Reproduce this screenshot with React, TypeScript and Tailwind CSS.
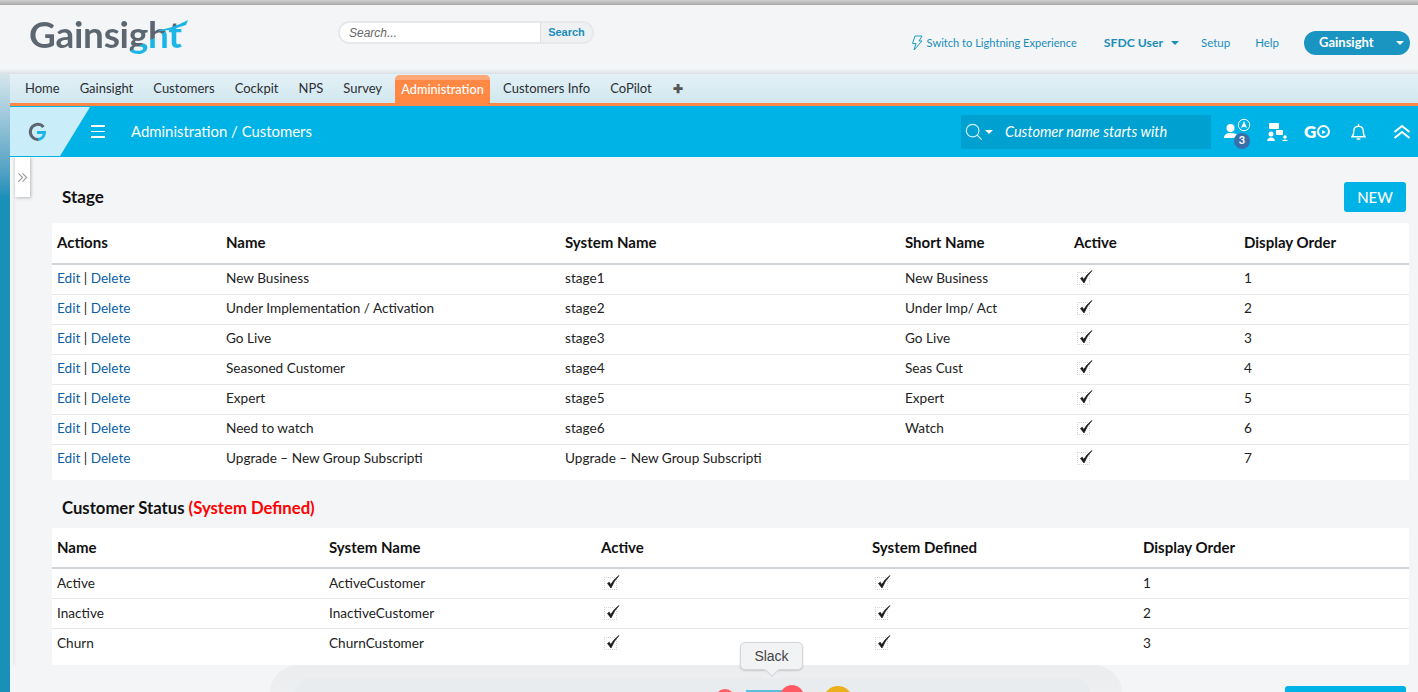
const font = "font-['Lato','Liberation_Sans',sans-serif]";

const navItems = ["Home", "Gainsight", "Customers", "Cockpit", "NPS", "Survey", "Administration", "Customers Info", "CoPilot"];

const stages = [
  ["New Business", "stage1", "New Business", "1"],
  ["Under Implementation / Activation", "stage2", "Under Imp/ Act", "2"],
  ["Go Live", "stage3", "Go Live", "3"],
  ["Seasoned Customer", "stage4", "Seas Cust", "4"],
  ["Expert", "stage5", "Expert", "5"],
  ["Need to watch", "stage6", "Watch", "6"],
  ["Upgrade – New Group Subscripti", "Upgrade – New Group Subscripti", "", "7"],
];

const statuses = [
  ["Active", "ActiveCustomer", "1"],
  ["Inactive", "InactiveCustomer", "2"],
  ["Churn", "ChurnCustomer", "3"],
];

function Check() {
  return (
    <span className="relative block h-[13px] w-[13px] border border-dotted border-[#d5d5d5]">
      <svg viewBox="0 0 16 16" className="absolute -top-[4px] left-0 h-[16px] w-[16px]">
        <path d="M2.5 9.5 L6 14 Q9 6.5 14 1.5 Q8.5 5.5 5.8 10.5 L4.2 8.2 Z" fill="#1a1a1a" stroke="#1a1a1a" strokeWidth="0.7" />
      </svg>
    </span>
  );
}

function HeaderTop() {
  return (
    <div className="flex h-[64px] items-start bg-[#f3f5f7] pl-[29px]">
      <div className="relative mt-[6px] w-[160px]">
        <span className={`inline-block bg-[linear-gradient(151deg,#5c6670_73%,#1cb5e5_73%)] bg-clip-text pr-[2px] text-[37px] font-bold leading-[46px] tracking-[-0.3px] text-transparent ${font}`}>
          Gainsight
        </span>
        <svg viewBox="0 0 30 12" className="absolute left-[130px] top-[8px] h-[12px] w-[30px]">
          <path d="M0 11 Q14 9 29 1 L27 6 Q14 11 0 12.5 Z" fill="#1cb5e5" />
        </svg>
      </div>
      <div className="ml-[149px] mt-[16px] flex h-[23px] w-[256px] overflow-hidden rounded-full border-2 border-[#e6e8ea]">
        <span className="flex flex-1 items-center bg-white pl-[9px] font-['Liberation_Sans',sans-serif] text-[12px] italic text-[#666]">Search...</span>
        <span className="flex w-[52px] items-center justify-center border-l border-[#dcdfe2] bg-[#eef0f2] font-['Liberation_Sans',sans-serif] text-[11px] font-bold text-[#1b8dba]">Search</span>
      </div>
      <div className={`ml-auto mt-[26px] flex items-center pr-[8px] text-[#1b8dba] ${font}`}>
        <svg viewBox="0 0 12 16" className="mr-[4px] h-[16px] w-[12px]" fill="none" stroke="#1b9cc6" strokeWidth="1">
          <path d="M4 1 H11 L8 6 H11 L3 15 L5 8.5 H1.5 Z" />
        </svg>
        <span className="text-[11.1px]">Switch to Lightning Experience</span>
        <span className="ml-[27px] text-[12.2px] font-bold">SFDC User</span>
        <span className="ml-[8px] h-0 w-0 border-x-[4px] border-t-[4px] border-x-transparent border-t-[#1b8dba]" />
        <span className="ml-[22px] text-[11.5px]">Setup</span>
        <span className="ml-[25px] text-[11.5px]">Help</span>
        <span className="ml-[25px] flex h-[24px] w-[106px] items-center rounded-full bg-[#1a94c0] pl-[15px] text-[13px] font-bold text-white">
          Gainsight
          <span className="ml-auto mr-[6px] h-0 w-0 border-x-[4px] border-t-[4px] border-x-transparent border-t-white" />
        </span>
      </div>
    </div>
  );
}

function NavBar() {
  return (
    <div className={`flex h-[29px] items-end rounded-tl-[3px] bg-gradient-to-b from-[#e4f1f7] to-[#d1e7ef] pl-[5px] text-[13px] text-[#2b2f33] ${font}`}>
      {navItems.map((item) =>
        item === "Administration" ? (
          <span key={item} className="relative mx-[3px] flex h-[28px] w-[95px] items-center justify-center rounded-t-[5px] bg-[#ff8845] pt-[1px] text-[12.7px] font-medium text-white">
            <span className="absolute inset-x-0 top-0 h-[5px] rounded-t-[5px] bg-[#ffa877]" />
            <span className="relative">{item}</span>
          </span>
        ) : (
          <span key={item} className="flex h-[29px] items-center px-[10px]">{item}</span>
        )
      )}
      <span className="flex h-[29px] items-center pl-[11px] text-[12px] font-bold leading-none text-[#555]">✚</span>
    </div>
  );
}

function BlueBar() {
  return (
    <div className={`flex h-[51px] items-center bg-[#00b3e6] text-white ${font}`}>
      <div className="flex h-[49px] w-[80px] items-center bg-[#c9eef9] pl-[17px] [clip-path:polygon(0_0,100%_0,62.5%_100%,0_100%)]">
        <svg viewBox="0 0 20 20" className="h-[20px] w-[20px]" fill="none" strokeWidth="3">
          <path d="M16.5 5 A7.5 7.5 0 1 0 12 17.3" stroke="#5c6670" />
          <path d="M10 10.5 H17.5 Q17 16.5 11 17.5" stroke="#1cb5e5" />
        </svg>
      </div>
      <div className="ml-[1px] flex w-[14px] flex-col gap-[4px]">
        <span className="h-[1.5px] bg-white" />
        <span className="h-[1.5px] bg-white" />
        <span className="h-[1.5px] bg-white" />
      </div>
      <span className="ml-[26px] text-[14.9px]">Administration / Customers</span>
      <div className="ml-auto flex h-[34px] w-[250px] items-center bg-[#00a0d0] pl-[4px]">
        <svg viewBox="0 0 20 20" className="h-[18px] w-[18px]" fill="none" stroke="#d5f2fb" strokeWidth="1.3">
          <circle cx="8.5" cy="8.5" r="7" />
          <path d="M13.5 13.5 L18.5 18.5" />
        </svg>
        <span className="ml-[2px] h-0 w-0 border-x-[4px] border-t-[4px] border-x-transparent border-t-white" />
        <span className="ml-[12px] text-[14.5px] italic">Customer name starts with</span>
      </div>
      <div className="relative ml-[13px] h-[34px] w-[30px]">
        <svg viewBox="0 0 30 34" className="h-[34px] w-[30px]" fill="white">
          <circle cx="6.5" cy="13" r="4" />
          <path d="M0 22 Q1 18 6.5 18 Q12 18 13 20 L10 23 H0 Z" />
          <circle cx="20" cy="10" r="5.7" fill="none" stroke="white" strokeWidth="1" />
          <path d="M20 6 L23 13 L20 11.5 L17 13 Z" />
        </svg>
        <span className="absolute left-[10px] top-[18px] flex h-[16px] w-[16px] items-center justify-center rounded-full bg-[#3a6ea8] text-[11px] font-bold">3</span>
      </div>
      <svg viewBox="0 0 22 20" className="ml-[12px] h-[20px] w-[22px]" fill="white">
        <rect x="3" y="1" width="10" height="6" rx="1" />
        <rect x="10" y="8" width="7" height="5" rx="1" />
        <circle cx="5" cy="12" r="2.5" />
        <path d="M1 19 Q1.5 15.5 5 15.5 Q8.5 15.5 9 19 Z" />
        <circle cx="19" cy="15" r="1.8" />
        <path d="M16 19 Q16.5 17.5 19 17.5 Q21.5 17.5 22 19 Z" />
      </svg>
      <span className="ml-[16px] flex w-[27px] items-center text-[17px] font-extrabold leading-none">
        G
        <span className="ml-[1px] flex h-[13px] w-[13px] items-center justify-center rounded-full border-[2.5px] border-white">
          <span className="ml-[1px] h-0 w-0 border-y-[2.5px] border-l-[4px] border-y-transparent border-l-white" />
        </span>
      </span>
      <svg viewBox="0 0 16 18" className="ml-[20px] h-[18px] w-[15px]" fill="none" stroke="white" strokeWidth="1.5">
        <path d="M1 14 Q3 12 3 8 Q3 3 8 3 Q13 3 13 8 Q13 12 15 14 Z" />
        <path d="M8 0.5 V3 M6 16.5 H10" />
      </svg>
      <svg viewBox="0 0 18 16" className="ml-[27px] mr-[7px] h-[16px] w-[18px]" fill="none" stroke="white" strokeWidth="2">
        <path d="M1.5 8 L9 2 L16.5 8 M1.5 14 L9 8 L16.5 14" />
      </svg>
    </div>
  );
}

function StageTable() {
  const cols = "grid grid-cols-[169px_339px_340px_169px_170px_1fr] pl-[5px]";
  return (
    <div className={`mt-[11px] h-[257px] rounded-[2px] bg-white text-[13.6px] text-[#222] ${font}`}>
      <div className={`${cols} h-[42px] items-center border-b-2 border-[#d0d5d9] pb-[2px] text-[15px] font-bold text-[#111]`}>
        {["Actions", "Name", "System Name", "Short Name", "Active", "Display Order"].map((h) => (
          <span key={h}>{h}</span>
        ))}
      </div>
      {stages.map((row, i) => (
        <div key={row[3]} className={`${cols} h-[30px] items-center border-b pb-[3px] ${i < stages.length - 1 ? "border-[#e6e8ea]" : "border-transparent"}`}>
          <span>
            <span className="text-[#0b5fa5]">Edit</span> | <span className="text-[#0b5fa5]">Delete</span>
          </span>
          <span>{row[0]}</span>
          <span>{row[1]}</span>
          <span>{row[2]}</span>
          <span className="pl-[3px] pt-[1px]"><Check /></span>
          <span>{row[3]}</span>
        </div>
      ))}
    </div>
  );
}

function StatusTable() {
  const cols = "grid grid-cols-[272px_272px_271px_271px_1fr] pl-[5px]";
  return (
    <div className={`mt-[10px] h-[137px] rounded-[2px] bg-white text-[13.6px] text-[#222] ${font}`}>
      <div className={`${cols} h-[41px] items-center border-b-2 border-[#d0d5d9] text-[15px] font-bold text-[#111]`}>
        {["Name", "System Name", "Active", "System Defined", "Display Order"].map((h) => (
          <span key={h}>{h}</span>
        ))}
      </div>
      {statuses.map((row, i) => (
        <div key={row[0]} className={`${cols} h-[30px] items-center border-b pb-[1px] ${i < statuses.length - 1 ? "border-[#e6e8ea]" : "border-transparent"}`}>
          <span>{row[0]}</span>
          <span>{row[1]}</span>
          <span className="pl-[3px]"><Check /></span>
          <span className="pl-[3px]"><Check /></span>
          <span>{row[2]}</span>
        </div>
      ))}
    </div>
  );
}

export default function App() {
  return (
    <div className="relative h-[692px] w-[1418px] overflow-hidden bg-[#f3f5f7]">
      <div className="h-[5px] bg-gradient-to-b from-[#d0d0d0] to-[#a9a9a9]" />
      <HeaderTop />
      <div className="h-[5px] bg-gradient-to-b from-[#f3f5f7] to-[#d9dfe3]" />

      <div className="flex">
        <div className="h-[618px] w-[10px] shrink-0 bg-gradient-to-b from-[#d5e6ec] via-[#1a8fb8] via-20% to-[#1a8fb8]" />
        <div className="min-w-0 flex-1">
          <NavBar />
          <div className="h-[3px] bg-[#ff8845]" />
          <BlueBar />
          <div className="flex">
            <div className="w-[5px] shrink-0 self-stretch bg-gradient-to-r from-[#fafbfc] to-[#e6e8eb]" />
            <div className="flex h-[40px] w-[15px] shrink-0 items-center justify-center bg-white shadow-[1px_1px_3px_rgba(0,0,0,0.25)]">
              <svg viewBox="0 0 12 12" className="h-[11px] w-[11px]" fill="none" stroke="#999" strokeWidth="1.2">
                <path d="M1.5 1.5 L6 6 L1.5 10.5 M6 1.5 L10.5 6 L6 10.5" />
              </svg>
            </div>
            <div className="min-w-0 flex-1 pl-[22px] pr-[9px] pt-[25px]">
              <div className={`flex h-[30px] items-center justify-between pl-[10px] pr-[3px] ${font}`}>
                <span className="text-[17px] font-bold text-[#111]">Stage</span>
                <span className="flex h-[30px] w-[62px] items-center justify-center rounded-[3px] bg-[#00b3e6] text-[15px] font-medium text-white">NEW</span>
              </div>
              <StageTable />
              <div className={`mt-[18px] h-[20px] pl-[10px] text-[16.7px] font-bold leading-[20px] text-[#111] ${font}`}>
                Customer Status <span className="text-[#f00]">(System Defined)</span>
              </div>
              <StatusTable />
            </div>
          </div>
        </div>
      </div>

      {/* mac dock and the tooltip over the bottom of the page */}
      <div className="absolute left-[270px] top-[665px] h-[40px] w-[852px] rounded-t-[28px] bg-gradient-to-b from-[#ebedef] to-[#eef0f2]">
        <div className="absolute left-[25px] top-[13px] h-[30px] w-[795px] rounded-t-[16px] bg-[#e9ecef]" />
        <span className="absolute left-[445px] top-[24px] h-[20px] w-[20px] rounded-full bg-[#ff5a64]" />
        <span className="absolute left-[476px] top-[25px] h-[20px] w-[36px] border-t-2 border-[#5bbde0] bg-[#8fd3ea]" />
        <span className="absolute left-[510px] top-[20px] h-[24px] w-[24px] rounded-full bg-[#ff5a64]" />
        <span className="absolute left-[553px] top-[21px] h-[30px] w-[30px] rounded-full bg-[#ecb01f]" />
      </div>
      <div className="absolute left-[1285px] top-[686px] h-[10px] w-[121px] rounded-t-[3px] bg-[#00b3e6]" />
      <div className="absolute left-[740px] top-[642px] flex h-[28px] w-[63px] items-center justify-center rounded-[5px] border border-[#d3d5d8] bg-[#f2f3f5] font-['Liberation_Sans',sans-serif] text-[14px] text-[#444] shadow-[0_1px_2px_rgba(0,0,0,0.15)]">
        Slack
        <span className="absolute -bottom-[6px] left-[26px] h-[10px] w-[10px] rotate-45 border-b border-r border-[#d3d5d8] bg-[#f2f3f5]" />
      </div>
    </div>
  );
}
